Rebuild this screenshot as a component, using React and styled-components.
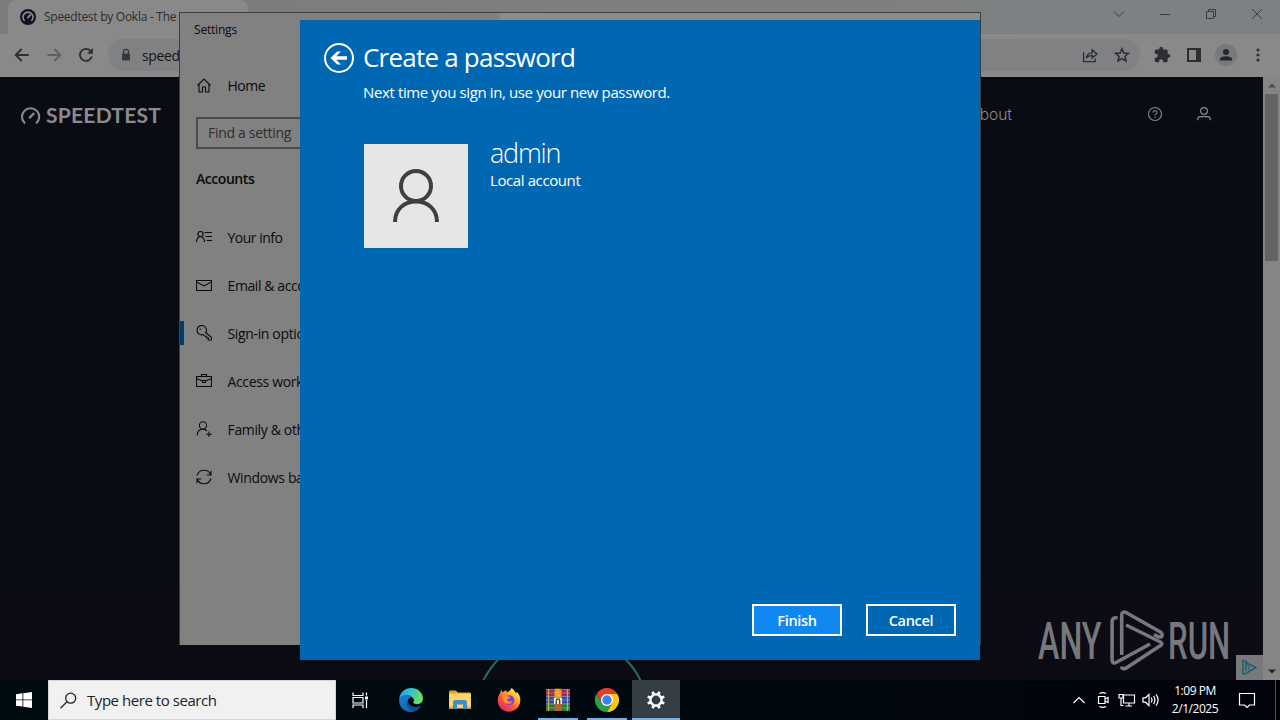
import React from 'react';
import styled, { createGlobalStyle, css } from 'styled-components';

const GlobalStyle = createGlobalStyle`
* { box-sizing: border-box; }
body {
margin: 0;
overflow: hidden;
background: #0a0c14;
font-family: "Open Sans", "Noto Sans", sans-serif;
}
svg { display: block; flex: none; }
button { font-family: inherit; }
`

const Desktop = styled.div`
position: relative;
display: flex;
flex-direction: column;
width: 1280px;
height: 720px;
overflow: hidden;
`

const Label = styled.span`
font-size: ${p => p.$size || 14}px;
font-weight: ${p => p.$weight || 400};
letter-spacing: ${p => p.$track || 0}px;
line-height: ${p => p.$line || 20}px;
white-space: nowrap;
`

/* ---- browser ---- */

const Browser = styled.div`
display: flex;
flex-direction: column;
height: 680px;
`

const TabStrip = styled.div`
display: flex;
justify-content: space-between;
height: 34px;
padding-left: 8px;
background: linear-gradient(90deg, #7b7c7d 0%, #7e7f80 70%, #7c8183 82%);
`

const Tab = styled.div`
display: flex;
align-items: center;
gap: 8px;
width: 240px;
height: 34px;
padding-left: 12px;
border-radius: 8px 8px 0 0;
background: #898989;
color: #2b2c2e;
overflow: hidden;
`

const WindowControls = styled.div`
display: flex;
align-items: center;
height: 28px;
color: #3a3c3e;
`

const ControlSlot = styled.div`
display: flex;
justify-content: center;
width: 46px;
`

const Toolbar = styled.div`
display: flex;
align-items: center;
height: 43px;
padding: 0 11px 1px 12px;
background: #898989;
color: #2c2e31;
`

const NavButtons = styled.div`
display: flex;
gap: 12px;
`

const AddressBar = styled.div`
display: flex;
align-items: center;
flex: 1;
height: 32px;
margin: 0 11px 0 12px;
padding: 0 8px 0 9px;
border-radius: 16px;
background: #7f8183;
`

const AddressText = styled.div`
flex: 1;
margin-left: 7px;
color: #131416;
`

const AddressIcons = styled.div`
display: flex;
gap: 12px;
`

const ToolbarIcons = styled.div`
display: flex;
align-items: center;
gap: 10px;
`

const Avatar = styled.div`
display: flex;
align-items: center;
justify-content: center;
width: 22px;
height: 22px;
border-radius: 50%;
background: #757a7e;
color: #24282e;
`

const Viewport = styled.div`
display: flex;
flex: 1;
min-height: 0;
`

const Page = styled.div`
display: flex;
flex-direction: column;
justify-content: space-between;
flex: 1;
background: linear-gradient(#0a0c14 80%, #0c0b13);
`

const SiteHeader = styled.header`
display: flex;
align-items: center;
height: 74px;
padding: 0 51px 0 20px;
color: #8a8b8e;
`

const SiteName = styled.div`
flex: 1;
margin: 2px 0 0 5px;
font-family: Lato, "Open Sans", sans-serif;
font-size: 21px;
font-weight: 700;
letter-spacing: 0.25px;
line-height: 24px;
`

const SiteNav = styled.div`
margin-right: 135px;
font-family: Inter, "Open Sans", sans-serif;
font-size: 15.5px;
font-weight: 300;
`

const SiteIcons = styled.div`
display: flex;
gap: 33px;
`

const DialRow = styled.div`
display: flex;
padding-left: 472px;
`

const Scrollbar = styled.div`
display: flex;
flex-direction: column;
align-items: center;
width: 17px;
background: #858585;
`

const ScrollArrow = styled.div`
display: flex;
align-items: center;
justify-content: center;
height: 17px;
color: ${p => p.$dim ? '#4c4c4c' : '#262626'};
`

const Track = styled.div`
flex: 1;
`

const Thumb = styled.div`
width: 13px;
height: 167px;
background: #646464;
`

/* ---- settings window ---- */

const SettingsWindow = styled.div`
position: absolute;
left: 179px;
top: 12px;
display: flex;
width: 802px;
height: 633px;
border: 1px solid #3e3e3e;
border-bottom: 0;
background: #8c8c8c;
`

const Sidebar = styled.div`
display: flex;
flex-direction: column;
width: 320px;
background: #818181;
color: #0b0b0b;
`

const SidebarTitle = styled.div`
height: 49px;
padding: 4px 14px;
`

const SidebarRow = styled.div`
position: relative;
display: flex;
align-items: center;
gap: 15.5px;
height: 48px;
padding-left: 16px;
${p => p.$active && css`
&:before {
content: "";
position: absolute;
left: 0;
top: 11px;
width: 4px;
height: 24px;
background: #003e6b;
}
`}
`

const SearchField = styled.div`
width: 288px;
height: 32px;
margin: 7px 16px 0;
padding: 2px 10px;
border: 2px solid #4a4a4a;
color: #2e2e2e;
`

const SectionTitle = styled.div`
height: 65px;
padding: 18px 16px 0;
`

/* ---- password dialog ---- */

const PasswordDialog = styled.div`
position: absolute;
left: 300px;
top: 20px;
display: flex;
flex-direction: column;
width: 680px;
height: 640px;
padding: 22px 24px 24px 23px;
background: #0067b3;
color: #fff;
`

const DialogHead = styled.div`
display: flex;
gap: 8px;
`

const DialogTitles = styled.div`
display: flex;
flex-direction: column;
gap: 9px;
margin-top: -1px;
`

const Account = styled.div`
display: flex;
flex: 1;
gap: 22px;
margin: 42px 0 0 41px;
`

const Picture = styled.div`
display: flex;
align-items: center;
justify-content: center;
width: 104px;
height: 104px;
background: #e6e6e6;
`

const AccountText = styled.div`
display: flex;
flex-direction: column;
margin-top: -8px;
`

const Actions = styled.div`
display: flex;
justify-content: flex-end;
gap: 24px;
`

const DialogButton = styled.button`
width: 90px;
height: 32px;
padding: 1px 0 0;
border: 2px solid #fff;
background: ${p => p.$primary ? '#1088f0' : 'transparent'};
color: #fff;
font-size: 14.5px;
font-weight: 600;
letter-spacing: -0.3px;
line-height: 27px;
`

/* ---- watermark ---- */

const Watermark = styled.div`
position: absolute;
left: 1038px;
top: 608px;
display: flex;
align-items: center;
width: 194px;
height: 64px;
color: #77777e;
`

const WatermarkWord = styled.div`
width: ${p => p.$w}px;
margin-left: ${p => p.$gap || 0}px;
padding-top: 3px;
font-family: Roboto, sans-serif;
font-size: 52px;
font-weight: 500;
line-height: 60px;
white-space: nowrap;
transform: scaleX(${p => p.$squeeze});
transform-origin: 0 50%;
`

const AdBadge = styled.div`
position: absolute;
left: 1236px;
top: 655px;
display: flex;
align-items: center;
justify-content: center;
width: 27px;
height: 25px;
background: #77797b;
`

/* ---- taskbar ---- */

const Taskbar = styled.div`
display: flex;
height: 40px;
background: linear-gradient(90deg, #000b10, #010810 60%, #01030c);
color: #fff;
`

const TaskButton = styled.div`
display: flex;
align-items: center;
justify-content: center;
width: 48px;
height: 40px;
background: ${p => p.$active ? '#343e45' : 'transparent'};
`

const RunningButton = styled(TaskButton)`
border-bottom: 2px solid #76b0e0;
padding-top: 2px;
width: ${p => p.$active ? 48 : 40}px;
margin: ${p => p.$active ? 0 : '0 4px'};
`

const TaskSearch = styled.div`
display: flex;
align-items: center;
gap: 10px;
width: 288px;
height: 40px;
padding-left: 11px;
border: 1px solid #d5d5d5;
background: #f1f1f1;
color: #222;
`

const Apps = styled.div`
display: flex;
flex: 1;
gap: 1px;
margin-left: 3px;
`

const Tray = styled.div`
display: flex;
align-items: center;
gap: 6px;
margin-right: 7px;
`

const Clock = styled.div`
display: flex;
flex-direction: column;
align-items: center;
width: 56px;
padding-top: 2px;
`

const PeekEdge = styled.div`
width: 5px;
margin-left: 4px;
border-left: 1px solid #4b4f55;
`

const line = { fill: 'none', stroke: 'currentColor' }

const SpeedtestFavicon = () => (
    <svg width="16" height="16" viewBox="0 0 16 16">
        <circle cx="8" cy="8" r="8" fill="#10131f" />
        <path d="M4.6 11.8A5 5 0 1 1 11.4 11.8" fill="none" stroke="#8d8e91" strokeWidth="1.6" />
        <path d="M7.3 9.2L10.5 5.6" stroke="#8d8e91" strokeWidth="1.7" />
    </svg>
)

const ArrowIcon = ({ flip, dim }) => (
    <svg width="20" height="20" viewBox="0 0 20 20" {...line} strokeWidth="1.9" opacity={dim ? 0.45 : 1}>
        <path d={flip ? 'M3.5 10H16M10.5 4L16.4 10L10.5 16' : 'M16.8 10H4M9.7 4L3.7 10L9.7 16'} />
    </svg>
)

const ReloadIcon = () => (
    <svg width="20" height="20" viewBox="0 0 20 20" {...line} strokeWidth="1.9">
        <path d="M15.8 11.4A6 6 0 1 1 14.5 5.9L16 7.4" />
        <path d="M16.9 3V8.8H11.1Z" fill="currentColor" stroke="none" />
    </svg>
)

const LockIcon = () => (
    <svg width="18" height="18" viewBox="0 0 18 18">
        <rect x="5" y="7.5" width="8" height="7" rx="1" fill="#36393c" />
        <path d="M6.5 8V5.9a2.5 2.5 0 0 1 5 0V8" fill="none" stroke="#36393c" strokeWidth="1.4" />
    </svg>
)

const ShareIcon = () => (
    <svg width="20" height="20" viewBox="0 0 20 20" {...line} strokeWidth="1.3">
        <path d="M3.6 7V16.6H15.2V13.4" />
        <path d="M6.2 13.2C6.8 9.7 9 7.9 12.2 7.8V4.8L16.9 9L12.2 13V10.3C9.4 10.4 7.8 11.2 6.2 13.2Z" />
    </svg>
)

const StarIcon = () => (
    <svg width="20" height="20" viewBox="0 0 20 20" {...line} strokeWidth="1.5">
        <path d="M10 3.7L11.8 8L16.4 8.4L12.9 11.5L14 16L10 13.6L6 16L7.1 11.5L3.6 8.4L8.2 8Z" />
    </svg>
)

const PuzzleIcon = () => (
    <svg width="22" height="22" viewBox="0 0 24 24" fill="currentColor">
        <path d="M19.3 11h-1.1V7.6c0-.9-.7-1.6-1.6-1.6h-3.4V5a2.1 2.1 0 0 0-4.2 0v1H5.7C4.8 6 4.1 6.7 4.1 7.6v3.1h1.1a2.2 2.2 0 0 1 0 4.4H4.1v3.1c0 .9.7 1.6 1.6 1.6h3.1v-1.1a2.2 2.2 0 0 1 4.4 0v1.1h3.4c.9 0 1.6-.7 1.6-1.6v-3.1h1.1a2.1 2.1 0 0 0 0-4.1z" />
    </svg>
)

const PanelIcon = () => (
    <svg width="22" height="22" viewBox="0 0 22 22">
        <path d="M4 4H18V18H4ZM6 6V16H13V6Z" fill="currentColor" fillRule="evenodd" />
    </svg>
)

const PersonIcon = () => (
    <svg width="14" height="14" viewBox="0 0 14 14" fill="currentColor">
        <circle cx="7" cy="4" r="3" />
        <path d="M1 12.6V11C1 9 4.8 8.2 7 8.2S13 9 13 11V12.6Z" />
    </svg>
)

const DotsIcon = () => (
    <svg width="22" height="22" viewBox="0 0 22 22" fill="currentColor">
        <circle cx="11" cy="6" r="1.6" />
        <circle cx="11" cy="11" r="1.6" />
        <circle cx="11" cy="16" r="1.6" />
    </svg>
)

const ControlIcon = ({ d }) => (
    <svg width="12" height="12" viewBox="0 0 12 12" {...line} strokeWidth="1">
        <path d={d} />
    </svg>
)

const GaugeLogo = () => (
    <svg width="21" height="21" viewBox="0 0 21 21" {...line} strokeWidth="2.1">
        <path d="M5.1 19.4A8.6 8.6 0 1 1 16.1 19.4" />
        <path d="M9.2 14.1L14.3 9" strokeWidth="2.3" />
    </svg>
)

const HelpIcon = () => (
    <svg width="16" height="16" viewBox="0 0 16 16" {...line} strokeWidth="1.1">
        <circle cx="8" cy="8" r="6.5" />
        <path d="M6 6.6C6 4 10 4.1 10 6.5C10 7.9 8 7.9 8 9.5" />
        <path d="M8 10.6V11.8" />
    </svg>
)

const ProfileIcon = () => (
    <svg width="16" height="16" viewBox="0 0 16 16" {...line} strokeWidth="1.2">
        <circle cx="8" cy="5" r="3.4" />
        <path d="M1.7 14.2V13.2C1.7 11.5 2.8 10.7 4.4 10.7H11.6C13.2 10.7 14.3 11.5 14.3 13.2V14.2" />
    </svg>
)

const Triangle = ({ down }) => (
    <svg width="8" height="5" viewBox="0 0 8 5" fill="currentColor">
        <path d={down ? 'M0 0.5H8L4 4.5Z' : 'M0 4.5H8L4 0.5Z'} />
    </svg>
)

// 16px line drawings of the settings sidebar
const sidebarIcons = {
    home: <path d="M1.5 8.5L8 2.1L14.5 8.5M3 7.3V15H6.500V10H9.5V15H13V7.3" />,
    info: <path d="M4.5 7.7A2.6 2.6 0 1 0 4.5 2.5A2.6 2.6 0 1 0 4.5 7.7M0.5 13C0.7 9.5 2.3 7.8 4.5 7.8S8.3 9.5 8.5 13M8.5 3.5H16M9.5 7.5H16M10.5 11.5H16" />,
    mail: <path d="M0.5 3.5H15.5V13.5H0.5ZM0.5 5L8 9L15.5 5" />,
    key: <path d="M9.3 8.2A4.7 4.7 0 1 0 7.2 9.6L9 11.3H10.5V13H12.3V15H15.5V12.6L9.3 7M3.7 3.7L4.7 4.7" />,
    work: <path d="M0.5 3.5H15.5V13.5H0.5ZM5.5 3.5V1.5H10.5V3.5M0.5 5.5L6.5 8M15.5 5.5L9.5 8M6.5 7.5H9.5V9.5H6.5Z" />,
    family: <path d="M7 8A3.6 3.6 0 1 0 7 0.8A3.6 3.6 0 1 0 7 8M1 14.5C1.3 10.5 3.5 8.1 7 8.1C8.7 8.1 10 8.7 11 9.8M13 10.5V16M10.2 13.3H15.8" />,
    sync: <path d="M1 6.5C2 3.2 4.7 1.2 8 1.2C11 1.2 13.6 2.9 14.7 5.7M15 1.8V6H10.8M15 9.5C14 12.8 11.3 14.8 8 14.8C5 14.8 2.4 13.1 1.3 10.3M1 14.2V10H5.2" />,
}

const SidebarIcon = ({ name }) => (
    <svg width="16" height="18" viewBox="0 0 16 18" {...line} strokeWidth="1.1">{sidebarIcons[name]}</svg>
)

const BackCircle = () => (
    <svg width="32" height="32" viewBox="0 0 32 32">
        <circle cx="16" cy="16" r="14" fill="none" stroke="#fff" strokeWidth="2" />
        <path d="M7.5 16L14.2 9.6H18L13.2 14.3H24V17.7H13.2L18 22.4H14.2Z" fill="#fff" />
    </svg>
)

const UserPicture = () => (
    <svg width="52" height="56" viewBox="0 0 52 56" fill="none" stroke="#3f3f3f" strokeWidth="4">
        <circle cx="26" cy="18" r="15" />
        <path d="M5 54C5 41 14.5 33.5 26 33.5S47 41 47 54" />
    </svg>
)

const PlayMark = () => (
    <svg width="56" height="64" viewBox="0 0 56 64" fill="none" stroke="currentColor" strokeWidth="3.6">
        <path d="M8.5 10C5 9.3 3.1 10.5 3.1 13.5V52C3.1 55 5 55.6 7.5 54.2L41 36" />
        <path d="M12.7 47V7.5C12.7 4 14.5 3.2 17.5 4.8L51 23.7C54.5 26 53.5 29.7 49.5 28.8L45 26.5" />
        <path d="M17 17L51.5 34C53.3 35 53.3 36.5 51.5 37.6L18 59.5C15.5 61.5 13 61 12.7 58.5" />
    </svg>
)

const AdMark = () => (
    <svg width="17" height="17" viewBox="0 0 17 17" fill="none" stroke="#1c606f" strokeWidth="1.5">
        <path d="M5 12V3.5L15 8.5L4 15H2V1.5L6 3" />
        <path d="M5 5.5L8 7V11" strokeWidth="1" />
    </svg>
)

const WindowsLogo = () => (
    <svg width="16" height="16" viewBox="0 0 16 16" fill="#fff">
        <path d="M0 2.2L6.5 1.3V7.5H0ZM7.3 1.2L16 0V7.5H7.3ZM0 8.3H6.5V14.6L0 13.7ZM7.3 8.3H16V16L7.3 14.7Z" />
    </svg>
)

const SearchIcon = () => (
    <svg width="17" height="17" viewBox="0 0 17 17" {...line} strokeWidth="1.3">
        <circle cx="10.7" cy="6.2" r="5" />
        <path d="M7 9.8L0.5 16.3" />
    </svg>
)

const TaskViewIcon = () => (
    <svg width="17" height="17" viewBox="0 0 17 17" {...line} strokeWidth="1.2">
        <path d="M1 0.5V3.5H11V0.5M1 16V13H11V16M1 5.5H11V11H1ZM14.5 0.5V3.5M14.5 8V16" />
        <path d="M13 4.5H16V7.5H13Z" fill="currentColor" stroke="none" />
    </svg>
)

const EdgeIcon = () => (
    <svg width="24" height="24" viewBox="0 0 24 24">
        <defs>
            <linearGradient id="edgeTop" x1="0" y1="0" x2="1" y2="0.3">
                <stop offset="0" stopColor="#1b9de2" />
                <stop offset="0.5" stopColor="#35c1d0" />
                <stop offset="1" stopColor="#6ade5b" />
            </linearGradient>
            <linearGradient id="edgeLow" x1="0" y1="0" x2="0.6" y2="1">
                <stop offset="0" stopColor="#1b7fd0" />
                <stop offset="1" stopColor="#1560a8" />
            </linearGradient>
        </defs>
        <path d="M0.2 11C0.8 4.5 5.8 0 12 0C19 0 24 5 24 10.5C24 14 21.5 16.2 18.2 16.2C15.5 16.2 13.9 15.3 14.3 14.3C16 12.5 14.5 9 11 8.2C6 7 2 8 0.2 11Z" fill="url(#edgeTop)" />
        <path d="M0.2 11C1.5 8.3 4.5 6.5 8.2 6.7C11 7 13 8 13.5 9.2C10 9 8.5 11.5 9 14C9.8 18.5 15.5 21 21.5 18C19.5 21.8 16 24 12 24C4.5 24-0.6 18 0.2 11Z" fill="url(#edgeLow)" />
        <path d="M9 11.5C6.5 15 8 21 14 23.7C17.5 23 20.3 20.8 22 18C17 20.3 10.5 18.8 9 14Z" fill="#0f4c94" />
    </svg>
)

const ExplorerIcon = () => (
    <svg width="22" height="20" viewBox="0 0 22 20">
        <path d="M0 2C0 1 0.5 0.5 1.5 0.5H7L9 2.5H21.5V6H0Z" fill="#e8a21d" />
        <path d="M0 3.5H22V18.5H0Z" fill="#fbd56a" />
        <path d="M4 19V12.5C4 11 5 10 6.5 10H15.5C17 10 18 11 18 12.5V19H14V14.5H8V19Z" fill="#3a8fd0" />
        <path d="M0 16.5H4V18.5H0ZM18 16.5H22V18.5H18Z" fill="#eab23f" />
    </svg>
)

const FirefoxIcon = () => (
    <svg width="24" height="24" viewBox="0 0 24 24">
        <defs>
            <linearGradient id="fox" x1="0.85" y1="0.1" x2="0.2" y2="0.95">
                <stop offset="0" stopColor="#fff04a" />
                <stop offset="0.3" stopColor="#ffb02a" />
                <stop offset="0.6" stopColor="#ff5a36" />
                <stop offset="1" stopColor="#e8226d" />
            </linearGradient>
        </defs>
        <path d="M14.5 0C17.5 2 18.5 4.5 19 5.5C19.5 5 19.6 4.2 19.5 3.6C22 6 23.5 9 23.3 12.8C23 19 18 23.7 12 23.7C5.5 23.7 0.7 18.8 0.7 12.5C0.7 9 2 6 3.5 4.5C3.5 3.5 4 2.5 4.7 1.8C4.8 3 5.3 3.7 6 4.3C7.2 3 8.7 2.3 10 2.2C9.5 3 9.3 3.8 9.4 4.3C11 4.5 13 3 14.5 0Z" fill="url(#fox)" />
        <circle cx="12.3" cy="12.3" r="5" fill="#7542d8" />
        <path d="M5 7C7 5.8 9.5 6.5 10.8 8.5L13.5 9C13 10.5 10.5 10.5 10 12C11 14.5 14 13.5 15.5 13C14 17.5 6.5 16.5 6 11Z" fill="#ff9133" />
    </svg>
)

const WinrarIcon = () => (
    <svg width="24" height="24" viewBox="0 0 24 24">
        <rect y="1" width="24" height="7" fill="#a5264c" />
        <rect y="8" width="24" height="7" fill="#314fa0" />
        <rect y="15" width="24" height="8" fill="#287641" />
        <path d="M0 1.5H24M0 5H24" stroke="#d56a83" strokeWidth="0.8" />
        <path d="M0 8.5H24M0 12H24" stroke="#7891cf" strokeWidth="0.8" />
        <path d="M0 16H24M0 20H24" stroke="#67b078" strokeWidth="0.8" />
        <path d="M2.5 1V23M21.5 1V23" stroke="#d2a952" strokeWidth="1.2" />
        <path d="M8.5 0.5H15.5V23H8.5Z" fill="#b7622f" />
        <path d="M8.5 3L10 1H14L15.5 3V10H8.5Z" fill="#f39a2c" />
        <path d="M10 4.5H13M11 7H14" stroke="#fbd06a" strokeWidth="1.2" />
        <rect x="8" y="10" width="8" height="6" fill="#f1ecd9" />
        <path d="M10.3 16V12.5A1.7 1.7 0 0 1 13.7 12.5V16" fill="none" stroke="#4c3426" strokeWidth="1.3" />
    </svg>
)

const ChromeIcon = () => (
    <svg width="24" height="24" viewBox="0 0 24 24">
        <path d="M12 12L1.6 6A12 12 0 0 1 22.4 6Z" fill="#e33b2e" />
        <path d="M12 6H22.4A12 12 0 0 1 12 24L17.2 15Z" fill="#fbc716" />
        <path d="M1.6 6L6.8 15L12 12V6Z" fill="#e33b2e" />
        <path d="M1.6 6L6.8 15L12 18L17.2 15L12 24A12 12 0 0 1 1.6 6Z" fill="#2a9f4b" />
        <circle cx="12" cy="12" r="6" fill="#fff" />
        <circle cx="12" cy="12" r="4.7" fill="#3c82ee" />
    </svg>
)

const teeth = [0, 45, 90, 135, 180, 225, 270, 315]

const GearIcon = () => (
    <svg width="20" height="20" viewBox="0 0 20 20">
        <circle cx="10" cy="10" r="5.6" fill="none" stroke="#fff" strokeWidth="2.4" />
        {teeth.map(a => <path key={a} d="M8.5 4.5L8.8 1H11.2L11.5 4.5Z" fill="#fff" transform={`rotate(${a + 22.5} 10 10)`} />)}
    </svg>
)

const TrayIcon = ({ children }) => (
    <svg width="18" height="18" viewBox="0 0 18 18" {...line} strokeWidth="1.2">{children}</svg>
)

const sections = [
    ['info', 'Your info', -0.5],
    ['mail', 'Email & accounts', -0.4],
    ['key', 'Sign-in options', -0.35],
    ['work', 'Access work or school', -0.35],
    ['family', 'Family & other users', -0.35],
    ['sync', 'Windows backup', -0.35],
]

const controls = [
    'M1 3.5L6 8.5L11 3.5',
    'M1 6.5H11',
    'M1.5 3.5H8.5V10.5H1.5ZM3.5 3.5V1.5H10.5V8.5H8.5',
    'M1 1L11 11M11 1L1 11',
]

function BrowserWindow() {
    return <Browser>
        <TabStrip>
            <Tab>
                <SpeedtestFavicon />
                <Label $size={12} $track={-0.27}>Speedtest by Ookla - The</Label>
            </Tab>
            <WindowControls>
                {controls.map(d => <ControlSlot key={d}><ControlIcon d={d} /></ControlSlot>)}
            </WindowControls>
        </TabStrip>
        <Toolbar>
            <NavButtons>
                <ArrowIcon />
                <ArrowIcon flip dim />
                <ReloadIcon />
            </NavButtons>
            <AddressBar>
                <LockIcon />
                <AddressText><Label $size={14} $track={-0.35}>speedtest.net</Label></AddressText>
                <AddressIcons>
                    <ShareIcon />
                    <StarIcon />
                </AddressIcons>
            </AddressBar>
            <ToolbarIcons>
                <PuzzleIcon />
                <PanelIcon />
                <Avatar><PersonIcon /></Avatar>
                <DotsIcon />
            </ToolbarIcons>
        </Toolbar>
        <Viewport>
            <Page>
                <SiteHeader>
                    <GaugeLogo />
                    <SiteName>SPEEDTEST</SiteName>
                    <SiteNav>About</SiteNav>
                    <SiteIcons>
                        <HelpIcon />
                        <ProfileIcon />
                    </SiteIcons>
                </SiteHeader>
                <DialRow>
                    <svg width="180" height="50" viewBox="0 0 180 50">
                        <circle cx="90" cy="90" r="88" fill="none" stroke="#246b68" strokeWidth="2" />
                    </svg>
                </DialRow>
            </Page>
            <Scrollbar>
                <ScrollArrow $dim><Triangle /></ScrollArrow>
                <Thumb />
                <Track />
                <ScrollArrow><Triangle down /></ScrollArrow>
            </Scrollbar>
        </Viewport>
    </Browser>
}

function Settings() {
    return <SettingsWindow>
        <Sidebar>
            <SidebarTitle><Label $size={12} $track={-0.2}>Settings</Label></SidebarTitle>
            <SidebarRow>
                <SidebarIcon name="home" />
                <Label $track={-0.5}>Home</Label>
            </SidebarRow>
            <SearchField><Label $track={-0.3}>Find a setting</Label></SearchField>
            <SectionTitle><Label $weight={600} $track={-0.45}>Accounts</Label></SectionTitle>
            {
                sections.map(([icon, text, track]) => (
                    <SidebarRow key={icon} $active={icon === 'key'}>
                        <SidebarIcon name={icon} />
                        <Label $track={track}>{text}</Label>
                    </SidebarRow>
                ))
            }
        </Sidebar>
    </SettingsWindow>
}

function CreatePassword() {
    return <PasswordDialog>
        <DialogHead>
            <BackCircle />
            <DialogTitles>
                <Label $size={26} $line={32} $track={-0.78}>Create a password</Label>
                <Label $size={15} $track={-0.38}>Next time you sign in, use your new password.</Label>
            </DialogTitles>
        </DialogHead>
        <Account>
            <Picture><UserPicture /></Picture>
            <AccountText>
                <Label $size={27} $weight={300} $line={34} $track={-1.2}>admin</Label>
                <Label $size={15} $track={-0.4}>Local account</Label>
            </AccountText>
        </Account>
        <Actions>
            <DialogButton $primary>Finish</DialogButton>
            <DialogButton>Cancel</DialogButton>
        </Actions>
    </PasswordDialog>
}

function Bar() {
    return <Taskbar>
        <TaskButton><WindowsLogo /></TaskButton>
        <TaskSearch>
            <SearchIcon />
            <Label $size={15} $track={-0.45}>Type here to search</Label>
        </TaskSearch>
        <TaskButton><TaskViewIcon /></TaskButton>
        <Apps>
            <TaskButton><EdgeIcon /></TaskButton>
            <TaskButton><ExplorerIcon /></TaskButton>
            <TaskButton><FirefoxIcon /></TaskButton>
            <RunningButton><WinrarIcon /></RunningButton>
            <RunningButton><ChromeIcon /></RunningButton>
            <RunningButton $active><GearIcon /></RunningButton>
        </Apps>
        <Tray>
            <TrayIcon><path d="M3.5 12L9 6.5L14.5 12" /></TrayIcon>
            <TrayIcon>
                <path d="M4.5 5.5H11V12.5H4.5ZM11 8L14 6.5V11.5L11 10M5.5 2.5C7.5 1.5 10 1.5 12 2.5M5.5 15.5C7.5 16.5 10 16.5 12 15.5" />
            </TrayIcon>
            <TrayIcon><path d="M5.5 4H16.5V12H5.5ZM11 12V15M7.5 15H14M1 3.5H5V7H1ZM3 7V14.5H5.5" /></TrayIcon>
            <TrayIcon>
                <path d="M1 6.8H3.5L7 3.5V14.5L3.5 11.2H1ZM9 6.5C10.2 8 10.2 10 9 11.5M11.5 5C13.3 7.5 13.3 10.5 11.5 13M14 3.3C16.6 6.8 16.6 11.2 14 14.7" />
            </TrayIcon>
        </Tray>
        <Clock>
            <Label $size={12} $line={18} $track={-0.45}>1:09 PM</Label>
            <Label $size={12} $line={18} $track={-0.45}>2/1/2025</Label>
        </Clock>
        <TaskButton>
            <TrayIcon><path d="M1.5 2.5H16.5V14H11.5L9 16.5L6.5 14H1.5Z" /></TrayIcon>
        </TaskButton>
        <PeekEdge />
    </Taskbar>
}

export default function App() {
    return <Desktop>
        <GlobalStyle />
        <BrowserWindow />
        <Settings />
        <CreatePassword />
        <Watermark>
            <WatermarkWord $w={71} $squeeze={0.62}>ANY</WatermarkWord>
            <PlayMark />
            <WatermarkWord $w={66} $gap={3} $squeeze={0.6}>RUN</WatermarkWord>
        </Watermark>
        <AdBadge><AdMark /></AdBadge>
        <Bar />
    </Desktop>
};
